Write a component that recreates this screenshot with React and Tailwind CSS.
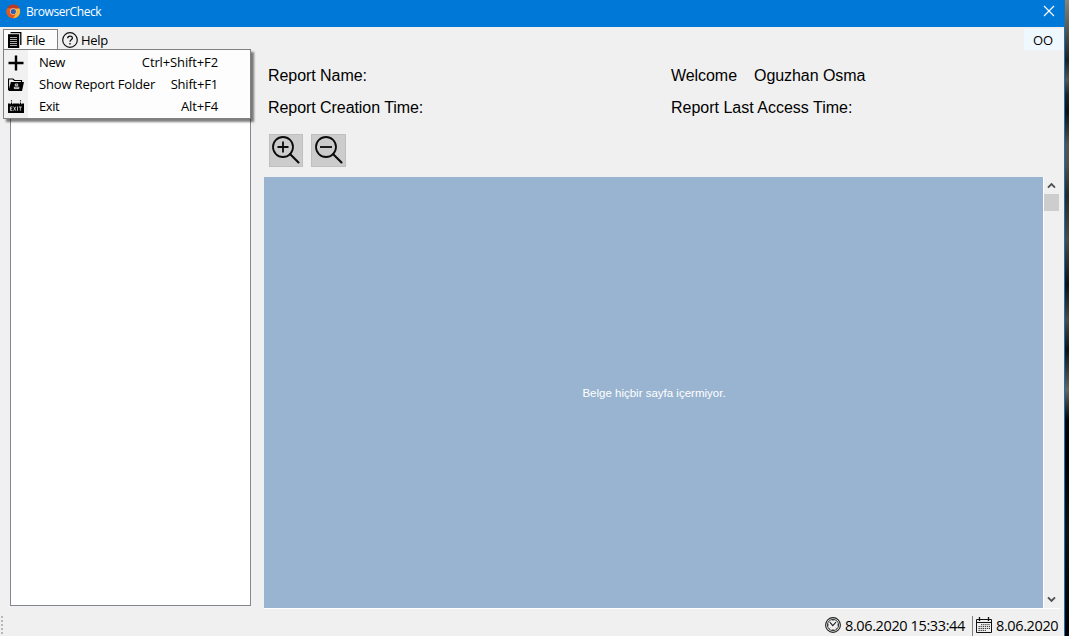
import React from "react";

function ChromeLogo() {
  return (
    <svg width="15" height="15" viewBox="0 0 15 15" className="-mt-[2px] shrink-0">
      <circle cx="7.3" cy="7.5" r="6.8" fill="#e8632b" />
      <path d="M1.3 4.2A6.8 6.8 0 0 1 13.5 4.6L7.3 4.5z" fill="#b93a25" />
      <path d="M13.5 4.6A6.8 6.8 0 0 1 7 14.3L10.4 8.5 9.5 4.7z" fill="#f7b334" />
      <path d="M1.3 4.2A6.8 6.8 0 0 0 7 14.3L9.5 10 4.5 9z" fill="#e4571f" />
      <circle cx="7.3" cy="7.5" r="3.3" fill="#f4c6a0" />
      <circle cx="7.3" cy="7.5" r="2.6" fill="#315fa8" />
    </svg>
  );
}

function PagesIcon() {
  return (
    <svg width="14" height="16" viewBox="0 0 14 16" className="-mt-[2px] shrink-0">
      <path d="M2.5 0.7H12.8V13" fill="none" stroke="#000" strokeWidth="1.3" />
      <path d="M0 2.2H11.2V16H0z" fill="#000" />
      <path d="M2 5.5H9M2 7.5H9M2 9.5H9M2 11.5H9M2 13.5H9" stroke="#d8d8d8" strokeWidth="0.8" />
    </svg>
  );
}

function HelpIcon() {
  return (
    <svg width="16" height="16" viewBox="0 0 16 16" fill="none" stroke="#111" className="-mt-[2px] shrink-0">
      <circle cx="8" cy="8" r="7.3" strokeWidth="1.2" />
      <path d="M5.7 6.2C5.7 3.4 10.4 3.3 10.4 6.1C10.4 7.9 8 7.8 8 9.7" strokeWidth="1.3" />
      <path d="M8 11V12.4" strokeWidth="1.4" />
    </svg>
  );
}

function PlusIcon() {
  return (
    <svg width="16" height="16" viewBox="0 0 16 16" className="-mt-px">
      <path d="M8 0.5V15.5M0.5 8H15.5" stroke="#000" strokeWidth="2.4" />
    </svg>
  );
}

function FolderIcon() {
  return (
    <svg width="16" height="16" viewBox="0 0 16 16">
      <path d="M0.5 13V2H5L6.5 3.5H13.5V5" fill="none" stroke="#000" strokeWidth="1.2" />
      <path d="M2.8 5H16L14 14H0.5z" fill="#000" />
      <path d="M7.3 7h2.4v1.8H7.3zM6.3 11.6V10.2h4.6v1.4z" fill="none" stroke="#eee" strokeWidth="0.9" />
    </svg>
  );
}

function ExitIcon() {
  return (
    <svg width="16" height="16" viewBox="0 0 16 16">
      <path d="M3.5 3.5V6M12.5 3.5V6" stroke="#000" strokeWidth="1.2" />
      <path d="M3.5 1V2.4M12.5 1V2.4" stroke="#444" strokeWidth="1.2" />
      <path d="M0 4.6H2L3.5 6 5 4.6H11L12.5 6 14 4.6H16V14H0z" fill="#000" />
      <path
        d="M4.4 7.9H2.4V11.4H4.4M2.4 9.7H4.2M5.6 7.6L7.8 11.7M7.8 7.6L5.6 11.7M9.5 7.6V11.7M10.8 8H13.8M12.3 8V11.7"
        fill="none"
        stroke="#eee"
        strokeWidth="0.8"
      />
    </svg>
  );
}

function Magnifier({ plus }) {
  return (
    <svg width="28" height="28" viewBox="0 0 28 28" fill="none" stroke="#0b0b0b" strokeWidth="1.8">
      <circle cx="11" cy="11" r="10" />
      <path d="M18 18L26.5 26.5" strokeWidth="2.1" strokeLinecap="round" />
      <path d={plus ? "M5.5 11H16.5M11 5.5V16.5" : "M5 11H17"} />
    </svg>
  );
}

function ClockIcon() {
  return (
    <svg width="16" height="16" viewBox="0 0 16 16" fill="none" stroke="#222" className="-mt-px shrink-0">
      <circle cx="8" cy="8" r="7.4" strokeWidth="1.1" />
      <circle cx="8" cy="8" r="5.6" strokeWidth="0.9" />
      <path d="M4.8 5.2L7.8 8.7L11 5.2" strokeWidth="1.1" />
      <path d="M8 3V4M8 12V13M3 8H4M12 8H13M4.5 11.5L5.2 10.8M11.5 11.5L10.8 10.8" strokeWidth="0.8" />
    </svg>
  );
}

function CalendarIcon() {
  return (
    <svg width="16" height="16" viewBox="0 0 16 16" fill="none" stroke="#111" className="-mt-px shrink-0">
      <path d="M0.5 2.5H15.5V15.5H0.5zM0.5 5.5H15.5" strokeWidth="1" />
      <path d="M3.5 0V4M12.5 0V4" strokeWidth="1.3" />
      <path d="M5 7.7H14M2.5 9.6H14M2.5 11.5H14M2.5 13.4H10" stroke="#333" strokeWidth="1" strokeDasharray="1.3 0.8" />
    </svg>
  );
}

function Chevron({ down }) {
  return (
    <svg width="9" height="7" viewBox="0 0 9 7" fill="none" stroke="#505050" strokeWidth="1.9">
      <path d={down ? "M1 1.3L4.5 4.8L8 1.3" : "M1 5.7L4.5 2.2L8 5.7"} />
    </svg>
  );
}

const menuItems = [
  { label: "New", keys: "Ctrl+Shift+F2", Icon: PlusIcon, labelTrack: "tracking-[-0.4px]", keyTrack: "tracking-[-0.13px]" },
  { label: "Show Report Folder", keys: "Shift+F1", Icon: FolderIcon, labelTrack: "tracking-[-0.17px]", keyTrack: "tracking-[-0.2px]" },
  { label: "Exit", keys: "Alt+F4", Icon: ExitIcon, labelTrack: "tracking-[-0.4px]", keyTrack: "tracking-[-0.1px]" },
];

function FileMenu() {
  return (
    <div className="absolute left-[3px] top-[49px] z-10 flex h-[70px] w-[248px] flex-col border border-[#808080] bg-[linear-gradient(to_right,#f1f1f1_24px,#fdfdfd_24px)] pt-[2px] shadow-[3px_3px_2px_rgba(0,0,0,0.5)]">
      {menuItems.map(({ label, keys, Icon, labelTrack, keyTrack }) => (
        <div key={label} className="flex h-[22px] items-center pl-1 pr-8 text-[13px] text-black">
          <Icon />
          <span className={`ml-[15px] ${labelTrack}`}>{label}</span>
          <span className={`ml-auto ${keyTrack}`}>{keys}</span>
        </div>
      ))}
    </div>
  );
}

export default function App() {
  return (
    <div className="relative flex h-[636px] w-[1069px] overflow-hidden bg-[#f0f0f0] font-['Open_Sans','Noto_Sans',sans-serif] whitespace-nowrap text-black">
      <div className="flex w-[1064px] flex-col">
        <header className="flex h-[27px] shrink-0 items-center bg-[#0078d7] pb-[3px] pl-[6px] pr-[9px]">
          <ChromeLogo />
          <span className="ml-[5px] text-[12px] tracking-[-0.42px] text-white">BrowserCheck</span>
          <svg className="-mt-[2px] ml-auto" width="12" height="12" viewBox="0 0 12 12">
            <path d="M1 1L11 11M11 1L1 11" stroke="#fff" strokeWidth="1.2" />
          </svg>
        </header>

        <nav className="flex h-[26px] shrink-0 pl-[3px] text-[13px]">
          <div className="mt-[2px] flex h-[22px] w-[55px] items-center border border-[#808080] bg-[#fcfcfc] pl-1 pt-[2px]">
            <PagesIcon />
            <span className="ml-1 tracking-[-0.45px]">File</span>
          </div>
          <div className="flex items-center pl-1 pt-[2px]">
            <HelpIcon />
            <span className="ml-[3px] tracking-[-0.3px]">Help</span>
          </div>
          <div className="ml-auto mt-[2px] flex h-[21px] w-10 items-center justify-center bg-[#f0f8ff] pr-[2px] pt-[2px]">OO</div>
        </nav>

        <main className="flex h-[562px] shrink-0">
          <aside className="ml-[10px] h-[553px] w-[241px] border border-[#828790] bg-white" />
          <section className="ml-[13px] flex w-[796px] flex-col">
            <div className="grid h-[81px] grid-cols-[403px_1fr] grid-rows-[32px_32px] pl-1 pt-[7px] font-['Liberation_Sans',Arial,sans-serif] text-[16px] leading-8 tracking-[-0.06px]">
              <span>Report Name:</span>
              <div className="flex">
                <span className="w-[83px]">Welcome</span>
                <span>Oguzhan Osma</span>
              </div>
              <span>Report Creation Time:</span>
              <span className="tracking-normal">Report Last Access Time:</span>
            </div>
            <div className="flex h-[43px] gap-[8px] pl-[5px]">
              <div className="flex h-[33px] w-[34px] items-center justify-center border border-[#bfbfbf] bg-[#ccc] pb-px">
                <Magnifier plus />
              </div>
              <div className="flex h-[33px] w-[35px] items-center justify-center border border-[#bfbfbf] bg-[#ccc] pb-px">
                <Magnifier />
              </div>
            </div>
            <div className="flex h-[432px] border-b border-white">
              <div className="flex w-[779px] items-center justify-center bg-[#99b4d1] pl-[1px] pt-[2px] font-['Liberation_Sans',Arial,sans-serif] text-[11.5px] text-white">
                Belge hiçbir sayfa içermiyor.
              </div>
              <div className="flex w-[17px] flex-col items-center border-l border-white bg-[#f0f0f0] pr-px">
                <div className="flex h-[17px] items-center"><Chevron /></div>
                <div className="h-[17px] w-[15px] bg-[#cdcdcd]" />
                <div className="mt-auto flex h-[17px] items-center"><Chevron down /></div>
              </div>
            </div>
          </section>
        </main>

        <footer className="flex flex-1 items-center pr-[6px] text-[14.5px]">
          <div className="flex h-full w-[4px] flex-col gap-[2px] pl-px pt-px">
            <i className="h-[2px] w-[2px] bg-[#b8b8b8]" />
            <i className="h-[2px] w-[2px] bg-[#b8b8b8]" />
            <i className="h-[2px] w-[2px] bg-[#b8b8b8]" />
            <i className="h-[2px] w-[2px] bg-[#b8b8b8]" />
            <i className="h-[2px] w-[2px] bg-[#b8b8b8]" />
          </div>
          <div className="ml-auto flex w-[147px] items-center pb-px">
            <ClockIcon />
            <span className="ml-1 tracking-[-0.38px]">8.06.2020 15:33:44</span>
          </div>
          <div className="flex h-[21px] w-[86px] items-center border-l border-[#808080] pb-px pl-[3px]">
            <CalendarIcon />
            <span className="ml-[4px] tracking-[-0.38px]">8.06.2020</span>
          </div>
        </footer>
      </div>
      <div className="w-px bg-[#1675bd]" />
      <div className="w-1 bg-[linear-gradient(to_bottom,#85857b_0px,#55564d_30px,#202020_60px,#55554c_80px,#222_95px,#111_112px,#55554c_145px,#505048_165px,#292925_195px,#4c4b43_240px,#111_285px,#4c4c43_320px,#111_350px,#66665a_390px,#050505_420px,#000_460px,#111_530px,#000_636px)]" />
      <FileMenu />
    </div>
  );
}
